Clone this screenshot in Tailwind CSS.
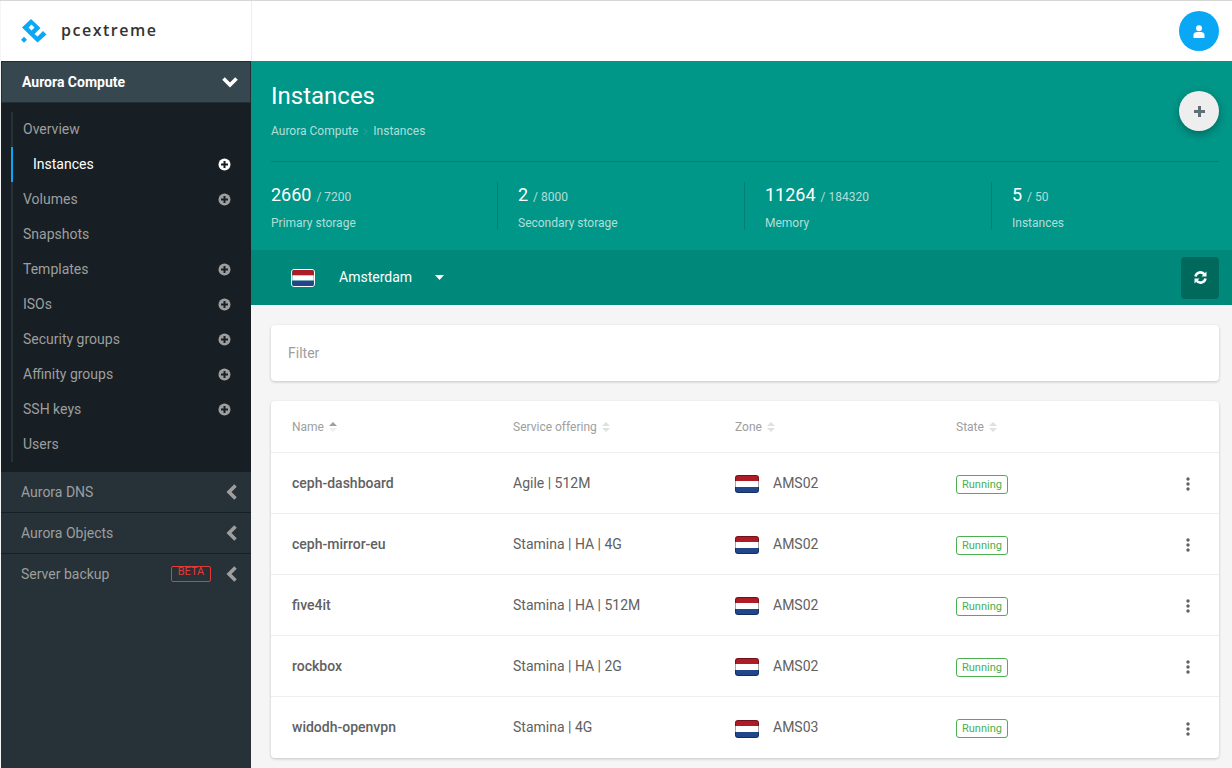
<!DOCTYPE html>
<html lang="en">
  <head>
    <meta charset="UTF-8" />
    <title>Instances</title>
    <script src="https://cdn.jsdelivr.net/npm/@tailwindcss/browser@4"></script>
  </head>
  <body class="bg-[#f5f5f5] font-['Roboto',sans-serif] h-[768px] overflow-hidden">
    <div class="flex h-[768px] border-t border-t-[#d6d6d6] pl-px bg-[#f5f5f5]">
      <!-- Sidebar -->
      <aside class="w-[250px] shrink-0 flex flex-col bg-[#263238]">
        <div class="h-[60px] bg-white flex items-center pl-[19px] gap-[12px] shrink-0">
          <svg width="29" height="29" viewBox="0 0 29 29">
            <path fill="#0aa7f5" fill-rule="evenodd" d="M11 2 L20.500 11 L14.500 17 L17.500 19.500 L23 14 L26.500 17.500 L17.500 25.500 L2 10.500 Z M11.500 7.500 L8.500 10.500 L11.500 13.500 L14.500 10.500 Z" />
            <path fill="#0aa7f5" d="M4 19.700 L7 22.700 L4 25.700 L1 22.700 Z" />
          </svg>
          <span class="font-['Open_Sans',sans-serif] font-semibold text-[16px] leading-[20px] mb-[2px] tracking-[1.5px] text-[#333]">pcextreme</span>
        </div>
        <div class="h-[42px] bg-[#37474f] border border-[#232e34] flex items-center pl-5 pr-[11px] justify-between shrink-0">
          <span class="text-[14px] font-bold text-white">Aurora Compute</span>
          <svg width="18" height="12" viewBox="0 0 18 12"><path d="M2.500 2.500 L9 9 L15.500 2.500" fill="none" stroke="#fff" stroke-width="3.600" /></svg>
        </div>
        <!-- Submenu -->
        <div class="bg-[#171f24] h-[369px] pt-[9px] pl-[10px] shrink-0">
          <ul class="text-[14px] text-[#9e9e9e] border-l-2 border-l-[#263238]">
            <li class="h-[35px] flex items-center pl-[10px]">Overview</li>
            <li class="h-[35px] flex items-center justify-between pl-5 pr-5 text-white -ml-0.5 border-l-2 border-l-[#0aa7f5]">
              <span>Instances</span>
              <svg width="13" height="13" viewBox="0 0 13 13"><circle cx="6.500" cy="6.500" r="6" fill="#fff" /><path d="M6.500 3v7M3 6.500h7" stroke="#171f24" stroke-width="2" /></svg>
            </li>
            <li class="h-[35px] flex items-center justify-between pl-[10px] pr-5">
              <span>Volumes</span>
              <svg width="13" height="13" viewBox="0 0 13 13"><circle cx="6.500" cy="6.500" r="6" fill="#9e9e9e" /><path d="M6.500 3v7M3 6.500h7" stroke="#171f24" stroke-width="2" /></svg>
            </li>
            <li class="h-[35px] flex items-center pl-[10px]">Snapshots</li>
            <li class="h-[35px] flex items-center justify-between pl-[10px] pr-5">
              <span>Templates</span>
              <svg width="13" height="13" viewBox="0 0 13 13"><circle cx="6.500" cy="6.500" r="6" fill="#9e9e9e" /><path d="M6.500 3v7M3 6.500h7" stroke="#171f24" stroke-width="2" /></svg>
            </li>
            <li class="h-[35px] flex items-center justify-between pl-[10px] pr-5">
              <span>ISOs</span>
              <svg width="13" height="13" viewBox="0 0 13 13"><circle cx="6.500" cy="6.500" r="6" fill="#9e9e9e" /><path d="M6.500 3v7M3 6.500h7" stroke="#171f24" stroke-width="2" /></svg>
            </li>
            <li class="h-[35px] flex items-center justify-between pl-[10px] pr-5">
              <span>Security groups</span>
              <svg width="13" height="13" viewBox="0 0 13 13"><circle cx="6.500" cy="6.500" r="6" fill="#9e9e9e" /><path d="M6.500 3v7M3 6.500h7" stroke="#171f24" stroke-width="2" /></svg>
            </li>
            <li class="h-[35px] flex items-center justify-between pl-[10px] pr-5">
              <span>Affinity groups</span>
              <svg width="13" height="13" viewBox="0 0 13 13"><circle cx="6.500" cy="6.500" r="6" fill="#9e9e9e" /><path d="M6.500 3v7M3 6.500h7" stroke="#171f24" stroke-width="2" /></svg>
            </li>
            <li class="h-[35px] flex items-center justify-between pl-[10px] pr-5">
              <span>SSH keys</span>
              <svg width="13" height="13" viewBox="0 0 13 13"><circle cx="6.500" cy="6.500" r="6" fill="#9e9e9e" /><path d="M6.500 3v7M3 6.500h7" stroke="#171f24" stroke-width="2" /></svg>
            </li>
            <li class="h-[35px] flex items-center pl-[10px]">Users</li>
          </ul>
        </div>
        <div class="text-[14px] text-[#9e9e9e]">
          <div class="h-[41px] flex items-center justify-between pl-5 pr-[13px] border-b border-b-[#171f24]">
            <span>Aurora DNS</span>
            <svg width="12" height="16" viewBox="0 0 12 16"><path d="M9.500 1.500 L3 8 L9.500 14.500" fill="none" stroke="#9e9e9e" stroke-width="3.600" /></svg>
          </div>
          <div class="h-[41px] flex items-center justify-between pl-5 pr-[13px] border-b border-b-[#171f24]">
            <span>Aurora Objects</span>
            <svg width="12" height="16" viewBox="0 0 12 16"><path d="M9.500 1.500 L3 8 L9.500 14.500" fill="none" stroke="#9e9e9e" stroke-width="3.600" /></svg>
          </div>
          <div class="h-[40px] flex items-center pl-5 pr-[13px]">
            <span>Server backup</span>
            <span class="ml-auto mr-[15px] w-10 h-[16px] border border-[#e53935] rounded-[2px] text-[#e53935] text-[11px] leading-[10px] text-center">BETA</span>
            <svg width="12" height="16" viewBox="0 0 12 16"><path d="M9.500 1.500 L3 8 L9.500 14.500" fill="none" stroke="#9e9e9e" stroke-width="3.600" /></svg>
          </div>
        </div>
      </aside>

      <!-- Main -->
      <div class="flex-1 min-w-0 flex flex-col">
        <header class="h-[60px] bg-white flex items-center justify-end pr-[13px] shrink-0 border-l border-l-[#eeeeee]">
          <div class="w-10 h-10 rounded-full bg-[#0aa7f5] flex items-center justify-center">
            <svg width="12" height="13" viewBox="0 0 12 13" fill="#fff"><circle cx="6" cy="3.300" r="3" /><path d="M0.500 13 V10 Q0.500 7.500 3.500 7 H8.500 Q11.500 7.500 11.500 10 V13 Z" /></svg>
          </div>
        </header>

        <section class="bg-[#009688] h-[189px] pl-5 pr-[13px] pt-[21px] shrink-0 text-white relative">
          <h1 class="text-[24px] leading-7">Instances</h1>
          <p class="mt-[14px] text-[12px] leading-[14px] text-white/70 flex items-center gap-[5px]">
            <span>Aurora Compute</span>
            <svg width="5" height="7" viewBox="0 0 5 7"><path d="M1 0.500 L4 3.500 L1 6.500" fill="none" stroke="#fff" stroke-opacity="0.2" /></svg>
            <span>Instances</span>
          </p>
          <button class="absolute right-[13px] top-[30px] w-10 h-10 rounded-full bg-[#eeeeee] shadow-[0_3px_8px_rgba(0,0,0,0.3)] flex items-center justify-center">
            <svg width="11" height="11" viewBox="0 0 11 11"><path d="M5.500 0v11M0 5.500h11" stroke="#616e75" stroke-width="3" /></svg>
          </button>
          <div class="mt-[23px] border-t border-t-black/15 pt-[20px] grid grid-cols-[227px_227px_227px_1fr] gap-5">
            <div class="h-[48px] border-r border-r-black/15">
              <p class="leading-[26px]"><span class="text-[18px]">2660</span> <span class="text-[12px] text-white/70 ml-px">/ 7200</span></p>
              <p class="mt-[5px] text-[12px] leading-[16px] text-white/70">Primary storage</p>
            </div>
            <div class="h-[48px] border-r border-r-black/15">
              <p class="leading-[26px]"><span class="text-[18px]">2</span> <span class="text-[12px] text-white/70 ml-px">/ 8000</span></p>
              <p class="mt-[5px] text-[12px] leading-[16px] text-white/70">Secondary storage</p>
            </div>
            <div class="h-[48px] border-r border-r-black/15">
              <p class="leading-[26px]"><span class="text-[18px]">11264</span> <span class="text-[12px] text-white/70 ml-px">/ 184320</span></p>
              <p class="mt-[5px] text-[12px] leading-[16px] text-white/70">Memory</p>
            </div>
            <div class="h-[48px]">
              <p class="leading-[26px]"><span class="text-[18px]">5</span> <span class="text-[12px] text-white/70 ml-px">/ 50</span></p>
              <p class="mt-[5px] text-[12px] leading-[16px] text-white/70">Instances</p>
            </div>
          </div>
        </section>

        <div class="bg-[#00897b] h-[55px] shrink-0 flex items-center pl-10 pr-[13px] text-white">
          <svg width="24" height="18" viewBox="0 0 24 18" class="rounded-[3px] border border-white">
            <rect width="24" height="6" fill="#ae1c28" /><rect y="6" width="24" height="6" fill="#fff" /><rect y="12" width="24" height="6" fill="#21468b" />
          </svg>
          <span class="ml-6 text-[14px]">Amsterdam</span>
          <svg width="9" height="5" viewBox="0 0 9 5" class="ml-[23px]"><path d="M0 0h9L4.500 5z" fill="#fff" /></svg>
          <button class="ml-auto w-[38px] h-[42px] rounded-[4px] bg-[#00695c] flex items-center justify-center">
            <svg width="13" height="13" viewBox="0 0 13 13" fill="none" stroke="#fff" stroke-width="2.600">
              <path d="M1.500 5.500 A5 5 0 0 1 10.500 3.500" /><path d="M11.500 7.500 A5 5 0 0 1 2.500 9.500" />
              <path d="M12.500 0.500v5h-5z" fill="#fff" stroke="none" /><path d="M0.500 12.500v-5h5z" fill="#fff" stroke="none" />
            </svg>
          </button>
        </div>

        <main class="pl-5 pr-[13px] pt-5 flex-1 min-h-0">
          <div class="h-14 bg-white rounded-[4px] shadow-[0_1px_3px_rgba(0,0,0,0.2)] flex items-center pl-[17px] text-[14px] text-[#9e9e9e]">Filter</div>

          <div class="mt-5 bg-white rounded-[4px] shadow-[0_1px_3px_rgba(0,0,0,0.2)]">
            <div class="h-[52px] grid grid-cols-[221px_222px_221px_1fr] pl-[21px] items-center border-b border-b-[#eeeeee] text-[12px] text-[#9e9e9e]">
              <span class="flex items-center gap-[5px]">Name
                <svg width="8" height="10" viewBox="0 0 8 10"><path d="M0 4h8L4 0z" fill="#9e9e9e" /><path d="M0 6h8L4 10z" fill="#eeeeee" /></svg>
              </span>
              <span class="flex items-center gap-[5px]">Service offering
                <svg width="8" height="10" viewBox="0 0 8 10"><path d="M0 4h8L4 0zM0 6h8L4 10z" fill="#e0e0e0" /></svg>
              </span>
              <span class="flex items-center gap-[5px]">Zone
                <svg width="8" height="10" viewBox="0 0 8 10"><path d="M0 4h8L4 0zM0 6h8L4 10z" fill="#e0e0e0" /></svg>
              </span>
              <span class="flex items-center gap-[5px]">State
                <svg width="8" height="10" viewBox="0 0 8 10"><path d="M0 4h8L4 0zM0 6h8L4 10z" fill="#e0e0e0" /></svg>
              </span>
            </div>

            <div class="text-[14px] text-[#616161]">
              <div class="h-[61px] grid grid-cols-[221px_222px_221px_1fr] pl-[21px] items-center border-b border-b-[#eeeeee]">
                <span class="font-medium">ceph-dashboard</span>
                <span>Agile | 512M</span>
                <span class="flex items-center gap-[14px]">
                  <svg width="24" height="18" viewBox="0 0 24 18" class="rounded-[3px] mt-[2px]"><rect width="24" height="6" fill="#ae1c28" /><rect y="6" width="24" height="6" fill="#fff" /><rect y="12" width="24" height="6" fill="#21468b" /><rect x="0.500" y="0.500" width="23" height="17" rx="2.500" fill="none" stroke="#000" stroke-opacity="0.35" /></svg>
                  AMS02
                </span>
                <span class="flex items-center justify-between pr-[29px] pt-[2px]">
                  <span class="w-[52px] h-[19px] border border-[#4caf50] rounded-[3px] text-[#4caf50] text-[11px] leading-[17px] text-center">Running</span>
                  <svg width="4" height="14" viewBox="0 0 4 14" fill="#616161"><circle cx="2" cy="2" r="1.700" /><circle cx="2" cy="7" r="1.700" /><circle cx="2" cy="12" r="1.700" /></svg>
                </span>
              </div>
              <div class="h-[61px] grid grid-cols-[221px_222px_221px_1fr] pl-[21px] items-center border-b border-b-[#eeeeee]">
                <span class="font-medium">ceph-mirror-eu</span>
                <span>Stamina | HA | 4G</span>
                <span class="flex items-center gap-[14px]">
                  <svg width="24" height="18" viewBox="0 0 24 18" class="rounded-[3px] mt-[2px]"><rect width="24" height="6" fill="#ae1c28" /><rect y="6" width="24" height="6" fill="#fff" /><rect y="12" width="24" height="6" fill="#21468b" /><rect x="0.500" y="0.500" width="23" height="17" rx="2.500" fill="none" stroke="#000" stroke-opacity="0.35" /></svg>
                  AMS02
                </span>
                <span class="flex items-center justify-between pr-[29px] pt-[2px]">
                  <span class="w-[52px] h-[19px] border border-[#4caf50] rounded-[3px] text-[#4caf50] text-[11px] leading-[17px] text-center">Running</span>
                  <svg width="4" height="14" viewBox="0 0 4 14" fill="#616161"><circle cx="2" cy="2" r="1.700" /><circle cx="2" cy="7" r="1.700" /><circle cx="2" cy="12" r="1.700" /></svg>
                </span>
              </div>
              <div class="h-[61px] grid grid-cols-[221px_222px_221px_1fr] pl-[21px] items-center border-b border-b-[#eeeeee]">
                <span class="font-medium">five4it</span>
                <span>Stamina | HA | 512M</span>
                <span class="flex items-center gap-[14px]">
                  <svg width="24" height="18" viewBox="0 0 24 18" class="rounded-[3px] mt-[2px]"><rect width="24" height="6" fill="#ae1c28" /><rect y="6" width="24" height="6" fill="#fff" /><rect y="12" width="24" height="6" fill="#21468b" /><rect x="0.500" y="0.500" width="23" height="17" rx="2.500" fill="none" stroke="#000" stroke-opacity="0.35" /></svg>
                  AMS02
                </span>
                <span class="flex items-center justify-between pr-[29px] pt-[2px]">
                  <span class="w-[52px] h-[19px] border border-[#4caf50] rounded-[3px] text-[#4caf50] text-[11px] leading-[17px] text-center">Running</span>
                  <svg width="4" height="14" viewBox="0 0 4 14" fill="#616161"><circle cx="2" cy="2" r="1.700" /><circle cx="2" cy="7" r="1.700" /><circle cx="2" cy="12" r="1.700" /></svg>
                </span>
              </div>
              <div class="h-[61px] grid grid-cols-[221px_222px_221px_1fr] pl-[21px] items-center border-b border-b-[#eeeeee]">
                <span class="font-medium">rockbox</span>
                <span>Stamina | HA | 2G</span>
                <span class="flex items-center gap-[14px]">
                  <svg width="24" height="18" viewBox="0 0 24 18" class="rounded-[3px] mt-[2px]"><rect width="24" height="6" fill="#ae1c28" /><rect y="6" width="24" height="6" fill="#fff" /><rect y="12" width="24" height="6" fill="#21468b" /><rect x="0.500" y="0.500" width="23" height="17" rx="2.500" fill="none" stroke="#000" stroke-opacity="0.35" /></svg>
                  AMS02
                </span>
                <span class="flex items-center justify-between pr-[29px] pt-[2px]">
                  <span class="w-[52px] h-[19px] border border-[#4caf50] rounded-[3px] text-[#4caf50] text-[11px] leading-[17px] text-center">Running</span>
                  <svg width="4" height="14" viewBox="0 0 4 14" fill="#616161"><circle cx="2" cy="2" r="1.700" /><circle cx="2" cy="7" r="1.700" /><circle cx="2" cy="12" r="1.700" /></svg>
                </span>
              </div>
              <div class="h-[61px] grid grid-cols-[221px_222px_221px_1fr] pl-[21px] items-center">
                <span class="font-medium">widodh-openvpn</span>
                <span>Stamina | 4G</span>
                <span class="flex items-center gap-[14px]">
                  <svg width="24" height="18" viewBox="0 0 24 18" class="rounded-[3px] mt-[2px]"><rect width="24" height="6" fill="#ae1c28" /><rect y="6" width="24" height="6" fill="#fff" /><rect y="12" width="24" height="6" fill="#21468b" /><rect x="0.500" y="0.500" width="23" height="17" rx="2.500" fill="none" stroke="#000" stroke-opacity="0.35" /></svg>
                  AMS03
                </span>
                <span class="flex items-center justify-between pr-[29px] pt-[2px]">
                  <span class="w-[52px] h-[19px] border border-[#4caf50] rounded-[3px] text-[#4caf50] text-[11px] leading-[17px] text-center">Running</span>
                  <svg width="4" height="14" viewBox="0 0 4 14" fill="#616161"><circle cx="2" cy="2" r="1.700" /><circle cx="2" cy="7" r="1.700" /><circle cx="2" cy="12" r="1.700" /></svg>
                </span>
              </div>
            </div>
          </div>
        </main>
      </div>
    </div>
  </body>
</html>
